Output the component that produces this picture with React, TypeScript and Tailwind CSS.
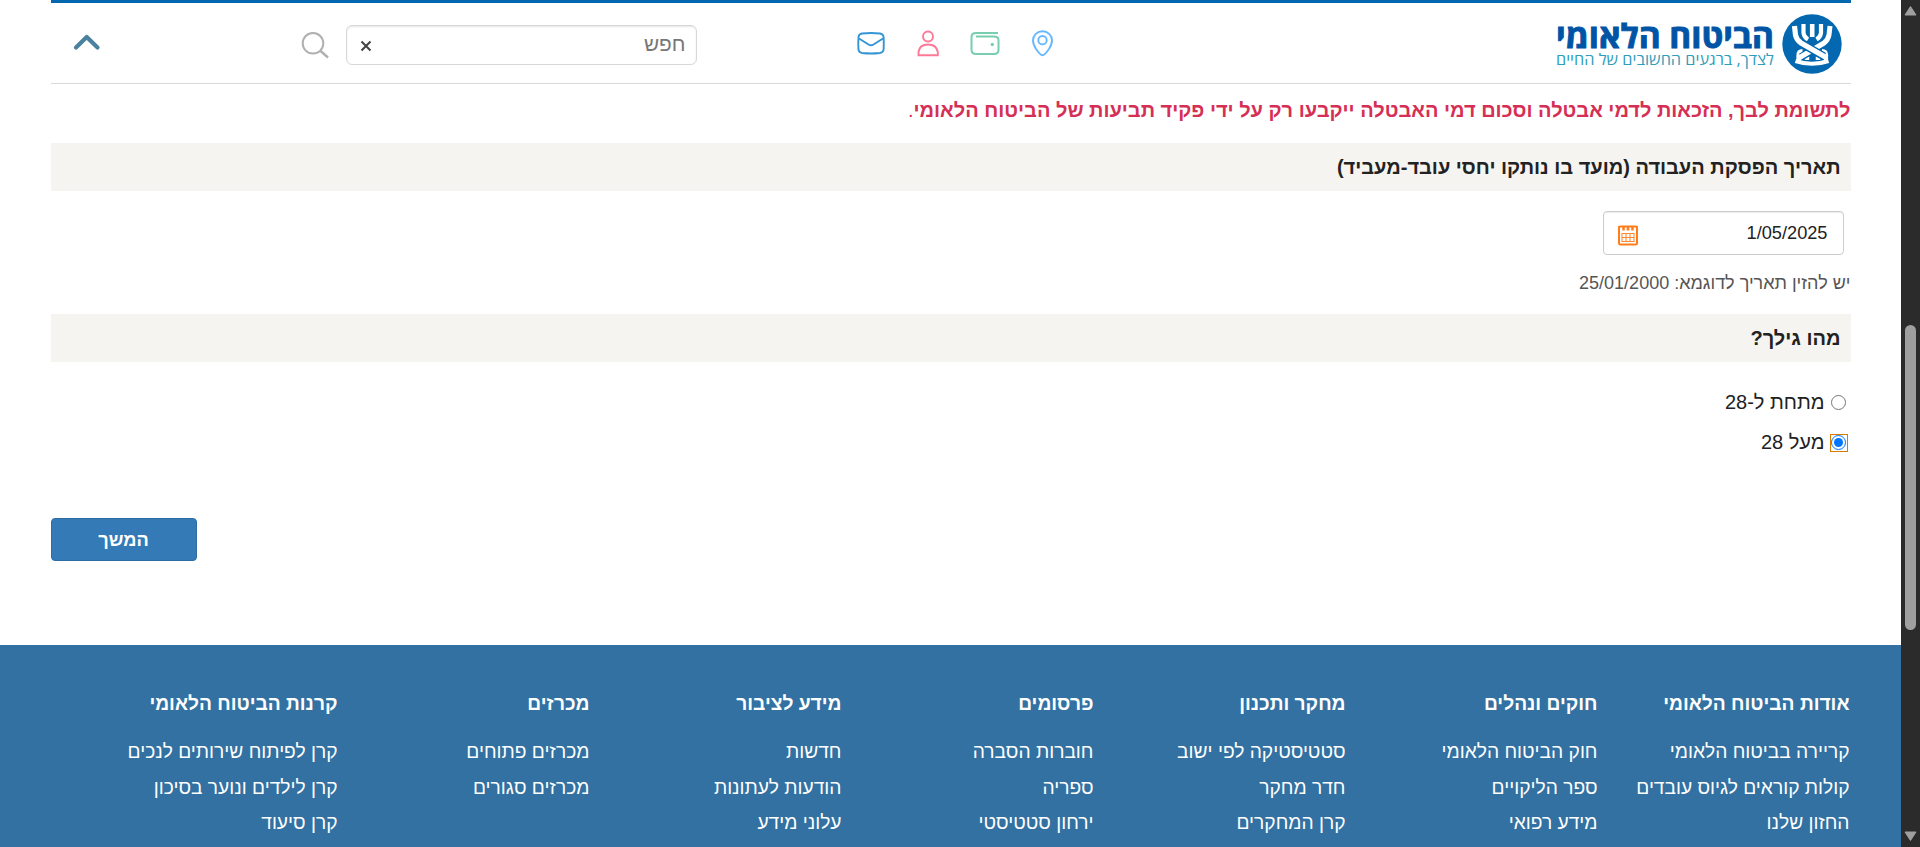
import React from "react";

const columns = [
  { title: "אודות הביטוח הלאומי", links: ["קריירה בביטוח הלאומי", "קולות קוראים לגיוס עובדים", "החזון שלנו"] },
  { title: "חוקים ונהלים", links: ["חוק הביטוח הלאומי", "ספר הליקויים", "מידע רפואי"] },
  { title: "מחקר ותכנון", links: ["סטטיסטיקה לפי ישוב", "חדר מחקר", "קרן המחקרים"] },
  { title: "פרסומים", links: ["חוברות הסברה", "ספריה", "ירחון סטטיסטי"] },
  { title: "מידע לציבור", links: ["חדשות", "הודעות לעתונות", "עלוני מידע"] },
  { title: "מכרזים", links: ["מכרזים פתוחים", "מכרזים סגורים"] },
  { title: "קרנות הביטוח הלאומי", links: ["קרן לפיתוח שירותים לנכים", "קרן לילדים ונוער בסיכון", "קרן סיעוד"] },
];

function Logo() {
  return (
    <svg width="290" height="64" viewBox="0 0 290 64" direction="ltr" className="block overflow-visible">
      <text x="116" y="34.500" textAnchor="middle" direction="rtl" textLength="218" lengthAdjust="spacingAndGlyphs" fill="#0054a6" stroke="#0054a6" strokeWidth="0.9" fontSize="33" fontWeight="700" fontFamily="'Open Sans', 'Liberation Sans', sans-serif">הביטוח הלאומי</text>
      <text x="116" y="51.500" textAnchor="middle" direction="rtl" textLength="218" lengthAdjust="spacingAndGlyphs" fill="#2f9dbb" fontSize="15.500" fontFamily="'Open Sans', 'Liberation Sans', sans-serif">לצדך, ברגעים החשובים של החיים</text>
      <circle cx="263" cy="31" r="29.700" fill="#0468b1" />
      <g fill="none" stroke="#fff" strokeLinejoin="round">
        <path d="M254.500 11V20Q255 24 259 26.500" strokeWidth="4.200" />
        <path d="M272 11V20Q271.500 24 267.500 26.500" strokeWidth="4.200" />
        <path d="M263.200 11V24" strokeWidth="4.600" />
        <path d="M249.500 48V42Q249.500 38 253.500 38" strokeWidth="4.200" />
        <path d="M277 48V42Q277 38 273 38" strokeWidth="4.200" />
        <path d="M258 47V43.500M269 47V43.500" strokeWidth="4.500" />
        <path d="M280.500 16L280 22Q279 27 275 30L252 44" stroke="#0468b1" strokeWidth="7.500" />
        <path d="M281 13L280 22Q279 27 275 30L249 45.500" strokeWidth="5" />
        <path d="M246.500 20Q247.500 27 252 30L275 43.500" stroke="#0468b1" strokeWidth="8" />
        <path d="M245.500 13L246.500 22Q247.500 27 252 30L278 45" strokeWidth="5.200" />
        <path d="M246.500 48Q263 53.500 279.500 48" strokeWidth="4.200" />
      </g>
    </svg>
  );
}

function HeaderIcons() {
  return (
    <svg width="200" height="32" viewBox="0 0 200 32" fill="none" strokeWidth="1.500" className="block">
      <g stroke="#3495d5">
        <path d="M7 5.500Q16 4.500 25 5.500Q28.300 6 28.600 9Q29 15 28.600 21.500Q28.300 24.500 25 25Q16 26 7 25Q3.800 24.500 3.500 21.500Q3 15 3.500 9Q3.800 6 7 5.500Z" strokeWidth="1.900" />
        <path d="M4 10.500L13.500 16.500Q16 18 18.500 16.500L28 10.500" strokeWidth="1.900" />
      </g>
      <g stroke="#ff7895" strokeWidth="1.900">
        <circle cx="73" cy="8.500" r="5" />
        <path d="M63.500 27.300V24Q64.500 16.500 73 16.500Q81.500 16.500 82.800 24V27.300Z" />
      </g>
      <g stroke="#79ceb0" strokeWidth="2">
        <path d="M143 5H121Q116.500 5 116.500 9V22Q116.500 26 121 26H139Q143.500 26 143.500 22V12Q143.500 8.500 139 8.500H121" />
        <circle cx="137.300" cy="16.500" r="1.700" fill="#79ceb0" stroke="none" />
      </g>
      <g stroke="#65b7ff" strokeWidth="1.900">
        <path d="M187.500 27.300Q185.500 27.300 181 21Q178 16 178 12.500A9.500 9.300 0 0 1 197 12.500Q197 16 194 21Q189.500 27.300 187.500 27.300Z" />
        <circle cx="187.500" cy="12.200" r="4.200" />
      </g>
    </svg>
  );
}

function CalendarIcon() {
  return (
    <svg width="20" height="21" viewBox="0 0 20 21" className="block">
      <rect x="0" y="0.500" width="20" height="20" rx="2.500" fill="#ff7d1a" />
      <path d="M2 2H4.300V5.500H6.800V2H8.700V5.500H11.300V2H13.200V5.500H15.700V2H18V18.500H2Z" fill="#fff" />
      <path d="M4 8.500H16V16.500H4ZM4 12.500H16M8 8.500V16.500M12 8.500V16.500" stroke="#ff8a33" strokeWidth="1.100" fill="none" />
      <path d="M0.500 1.700H19.500" stroke="#ff7d1a" strokeWidth="1.600" strokeLinecap="round" />
    </svg>
  );
}

function SectionTitle({ children }: { children: React.ReactNode }) {
  return <h2 className="flex h-12 items-center bg-[#f6f4f0] px-2.5 text-[20px] font-bold text-[#222]">{children}</h2>;
}

export default function App() {
  return (
    <div dir="ltr" className="flex h-[847px] w-full overflow-hidden bg-white font-['Liberation_Sans',Arial,sans-serif]">
      <div dir="rtl" className="flex min-w-0 flex-1 flex-col">
        <header className="mx-auto flex h-21 w-[1800px] shrink-0 items-start border-t-3 border-b border-t-[#0468b1] border-b-[#d9d9d9]">
          <div className="ms-3 mt-[10px]"><Logo /></div>
          <div className="ms-[494px] mt-[25px]"><HeaderIcons /></div>
          <div className="ms-[158px] mt-[22px] flex h-10 w-[351px] items-center justify-between rounded-md border border-[#d8d8d8] px-[10px] shadow-[inset_0_1px_2px_rgba(0,0,0,0.1)]">
            <span className="pb-[2px] text-[20.8px] text-[#777]">חפש</span>
            <svg width="12" height="12" viewBox="0 0 12 12" className="ms-auto me-[3px] mt-px"><path d="M1.500 1.500L10.500 10.500M10.500 1.500L1.500 10.500" stroke="#444" strokeWidth="2" /></svg>
          </div>
          <svg width="28" height="28" viewBox="0 0 28 28" className="ms-[17px] mt-[28px]" fill="none" stroke="#b0b0b0" strokeWidth="2"><circle cx="12" cy="12.300" r="10.300" /><path d="M19 19.500L27 26.500" strokeWidth="2.400" /></svg>
          <svg width="28" height="18" viewBox="0 0 28 18" className="ms-auto me-[22px] mt-[30px]" fill="none" stroke="#4a819f" strokeWidth="4.200" strokeLinecap="round" strokeLinejoin="round"><path d="M3 14.500L13.700 4L24.500 14.500" /></svg>
        </header>

        <main className="mx-auto flex h-[561px] w-[1800px] shrink-0 flex-col">
          <p className="mt-[14px] h-[45px] text-[20px] leading-6 text-[#d62f55]"><strong>לתשומת לבך, הזכאות לדמי אבטלה וסכום דמי האבטלה ייקבעו רק על ידי פקיד תביעות של הביטוח הלאומי</strong>.</p>
          <SectionTitle>תאריך הפסקת העבודה (מועד בו נותקו יחסי עובד-מעביד)</SectionTitle>
          <div className="mt-5 me-auto ms-[7px] flex h-11 w-[241px] items-center justify-between rounded-[4px] border border-[#ccc] ps-[15px] pe-[14px] text-[18.2px] text-[#222] shadow-[inset_0_1px_1px_rgba(0,0,0,0.075)]">
            <span dir="ltr" className="pt-[2px]">1/05/2025</span>
            <span className="mt-[5px]"><CalendarIcon /></span>
          </div>
          <p className="mt-4 mb-[19px] h-6 text-[18px] leading-6 text-[#555]">יש להזין תאריך לדוגמא: 25/01/2000</p>
          <SectionTitle>מהו גילך?</SectionTitle>
          <div className="mt-5 flex h-20 flex-col ps-[3px] text-[20px] text-[#222]">
            <label className="flex h-10 items-center gap-1">
              <span className="mt-px flex size-[19px] items-center justify-center"><span className="size-[15px] rounded-full border border-[#767676]" /></span>מתחת ל-28
            </label>
            <label className="flex h-10 items-center gap-1">
              <span className="mt-px flex size-[19px] items-end justify-start"><span className="flex size-[18px] items-start justify-end border border-[#d97b00]"><span className="flex size-[15px] shrink-0 items-center justify-center rounded-full border border-[#0075ff] bg-white"><span className="size-[9px] shrink-0 rounded-full bg-[#0075ff]" /></span></span></span>מעל 28
            </label>
          </div>
          <button className="ms-auto mt-14 h-[43px] w-[146px] rounded-[4px] border border-[#2e6da4] bg-[#337ab7] pt-[3px] text-[18.2px] font-bold text-white">המשך</button>
        </main>

        <footer className="flex-1 bg-[#3271a1] pt-[46px]">
          <div className="ms-[51.5px] flex text-white">
            {columns.map((c) => (
              <section key={c.title} className="w-[252px] shrink-0">
                <h3 className="mb-[18px] h-[25px] text-[19.2px] leading-[25px] font-bold">{c.title}</h3>
                <ul className="text-[19.2px] leading-[35.7px]">
                  {c.links.map((l) => <li key={l} className="h-[35.7px] whitespace-nowrap">{l}</li>)}
                </ul>
              </section>
            ))}
          </div>
        </footer>
      </div>

      <div className="flex w-[19px] shrink-0 flex-col items-center bg-[#2b2b2b]">
        <svg width="13" height="16" viewBox="0 0 13 16" className="mt-0 block"><path d="M6.500 6.500L12 15H1Z" fill="#9f9f9f" stroke="#9f9f9f" strokeLinejoin="round" /></svg>
        <div className="mt-[309px] h-[305px] w-[11px] rounded-full bg-[#9f9f9f]" />
        <svg width="13" height="16" viewBox="0 0 13 16" className="mt-auto mb-[1px] block"><path d="M6.500 10.500L12 2H1Z" fill="#9f9f9f" stroke="#9f9f9f" strokeLinejoin="round" /></svg>
      </div>
    </div>
  );
}
